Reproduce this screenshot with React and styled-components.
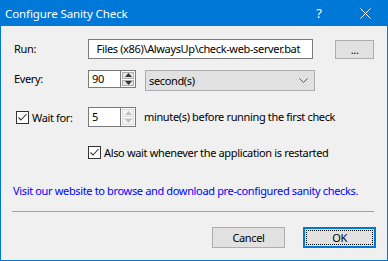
import React from "react";
import styled, { createGlobalStyle } from "styled-components";

const Global = createGlobalStyle`
  html, body { margin: 0; padding: 0; background: #f0f0f0; }
  body { font-family: "Noto Sans", "Open Sans", sans-serif; font-size: 11px; letter-spacing: -0.35px; color: #000; }
`;

const Window = styled.div`
  width: 388px;
  height: 261px;
  box-sizing: border-box;
  border: 1px solid #0078d7;
  border-top: none;
  background: #f0f0f0;
  display: flex;
  flex-direction: column;
`;

const TitleBar = styled.div`
  height: 26px;
  margin: 0 -1px;
  background: #0078d7;
  color: #fff;
  display: flex;
  align-items: center;
  padding-left: 5px;
  font-size: 11.5px;
  letter-spacing: -0.1px;
`;

const Title = styled.div`
  flex: 1;
`;

const TitleBtn = styled.div`
  width: 46px;
  height: 26px;
  display: flex;
  align-items: center;
  justify-content: center;
  font-size: 13px;
`;

const Body = styled.div`
  flex: 1;
  display: flex;
  flex-direction: column;
  padding: 13px 13px 0 11px;
`;

const Row = styled.div`
  display: flex;
  align-items: flex-start;
  margin-top: ${(p) => p.$mt || 0}px;
  height: ${(p) => p.$h}px;
`;

const Label = styled.div`
  width: 74px;
  padding-left: 2px;
  line-height: ${(p) => p.$lh}px;
`;

const TextInput = styled.div`
  box-sizing: border-box;
  width: ${(p) => p.$w}px;
  height: ${(p) => p.$h}px;
  border: 1px solid #7a7a7a;
  background: #fff;
  padding-left: ${(p) => p.$pl || 8}px;
  line-height: ${(p) => p.$h - 2}px;
  white-space: nowrap;
  overflow: hidden;
`;

const Button = styled.div`
  box-sizing: border-box;
  width: ${(p) => p.$w}px;
  height: ${(p) => p.$h}px;
  margin-left: ${(p) => p.$ml || 0}px;
  margin-top: ${(p) => p.$mt || 0}px;
  background: #e1e1e1;
  border: ${(p) => (p.$default ? "2px solid #0078d7" : "1px solid #adadad")};
  display: flex;
  align-items: center;
  justify-content: center;
  position: relative;
`;

const Focus = styled.div`
  position: absolute;
  inset: 1px;
  border: 1px dotted #000;
`;

const Spinner = styled.div`
  display: flex;
  height: ${(p) => p.$h}px;
`;

const SpinButtons = styled.div`
  box-sizing: border-box;
  width: 15px;
  height: 100%;
  border: 1px solid #7a7a7a;
  border-left: none;
  background: #fff;
  display: flex;
  flex-direction: column;
  padding: 1px;
  gap: 1px;
`;

const SpinHalf = styled.div`
  flex: 1;
  background: ${(p) => (p.$disabled ? "#f4f4f4" : "#e5e5e5")};
  border: 1px solid ${(p) => (p.$disabled ? "#dcdcdc" : "#adadad")};
  display: flex;
  align-items: center;
  justify-content: center;
`;

const Arrow = ({ up, disabled }) => (
  <svg width="7" height="4" viewBox="0 0 7 4">
    <path
      d={up ? "M0 4 L3.5 0 L7 4 Z" : "M0 0 L3.5 4 L7 0 Z"}
      fill={disabled ? "#bfbfbf" : "#333"}
    />
  </svg>
);

const Combo = styled.div`
  box-sizing: border-box;
  width: 170px;
  height: 21px;
  margin-left: 9px;
  background: #e1e1e1;
  border: 1px solid #adadad;
  display: flex;
  align-items: center;
  padding: 0 6px 0 3px;
`;

const ComboText = styled.div`
  flex: 1;
`;

const CheckLine = styled.div`
  display: flex;
  align-items: center;
  margin-left: ${(p) => p.$ml || 0}px;
  width: ${(p) => (p.$w ? `${p.$w}px` : "auto")};
  height: ${(p) => p.$h || 14}px;
`;

const Box = styled.div`
  box-sizing: border-box;
  width: 13px;
  height: 13px;
  border: 1px solid #333;
  background: #fff;
  margin-right: 3px;
  display: flex;
  align-items: center;
  justify-content: center;
`;

const Check = () => (
  <svg width="11" height="11" viewBox="0 0 11 11">
    <path d="M1.5 5.5 L4 8 L9.5 2" stroke="#333" strokeWidth="1.1" fill="none" />
  </svg>
);

const AfterText = styled.div`
  margin-left: 8px;
  line-height: 20px;
`;

const Link = styled.div`
  margin-top: 24px;
  color: #0000ff;
  line-height: 16px;
  padding-left: 1px;
  white-space: nowrap;
`;

const Separator = styled.div`
  margin-top: 12px;
  height: 1px;
  background: #a0a0a0;
  width: 362px;
`;

const Footer = styled.div`
  display: flex;
  justify-content: flex-end;
  gap: 18px;
  margin-top: 15px;
  margin-right: -2px;
`;

export default function App() {
  return (
    <>
      <Global />
      <Window>
        <TitleBar>
          <Title>Configure Sanity Check</Title>
          <TitleBtn>?</TitleBtn>
          <TitleBtn>
            <svg width="11" height="11" viewBox="0 0 11 11">
              <path d="M0.5 0.5 L10.5 10.5 M10.5 0.5 L0.5 10.5" stroke="#fff" strokeWidth="1" />
            </svg>
          </TitleBtn>
        </TitleBar>
        <Body>
          <Row $h={20}>
            <Label $lh={20}>Run:</Label>
            <TextInput $w={227} $h={20}>Files (x86)\AlwaysUp\check-web-server.bat</TextInput>
            <Button $w={39} $h={19} $ml={22} $mt={1}>...</Button>
          </Row>
          <Row $h={21} $mt={11}>
            <Label $lh={18}>Every:</Label>
            <Spinner $h={18}>
              <TextInput $w={33} $h={18} $pl={3}>90</TextInput>
              <SpinButtons>
                <SpinHalf><Arrow up /></SpinHalf>
                <SpinHalf><Arrow /></SpinHalf>
              </SpinButtons>
            </Spinner>
            <Combo>
              <ComboText>second(s)</ComboText>
              <svg width="9" height="5" viewBox="0 0 9 5">
                <path d="M0.5 0.5 L4.5 4.5 L8.5 0.5" stroke="#555" fill="none" />
              </svg>
            </Combo>
          </Row>
          <Row $h={20} $mt={16}>
            <CheckLine $ml={4} $w={72} $h={20}>
              <Box><Check /></Box>
              Wait for:
            </CheckLine>
            <Spinner $h={20}>
              <TextInput $w={33} $h={20} $pl={3}>5</TextInput>
              <SpinButtons>
                <SpinHalf $disabled><Arrow up disabled /></SpinHalf>
                <SpinHalf $disabled><Arrow disabled /></SpinHalf>
              </SpinButtons>
            </Spinner>
            <AfterText>minute(s) before running the first check</AfterText>
          </Row>
          <Row $h={14} $mt={18}>
            <CheckLine $ml={76}>
              <Box><Check /></Box>
              Also wait whenever the application is restarted
            </CheckLine>
          </Row>
          <Link>Visit our website to browse and download pre-configured sanity checks.</Link>
          <Separator />
          <Footer>
            <Button $w={73} $h={21}>Cancel</Button>
            <Button $w={73} $h={21} $default>
              <Focus />
              OK
            </Button>
          </Footer>
        </Body>
      </Window>
    </>
  );
}
